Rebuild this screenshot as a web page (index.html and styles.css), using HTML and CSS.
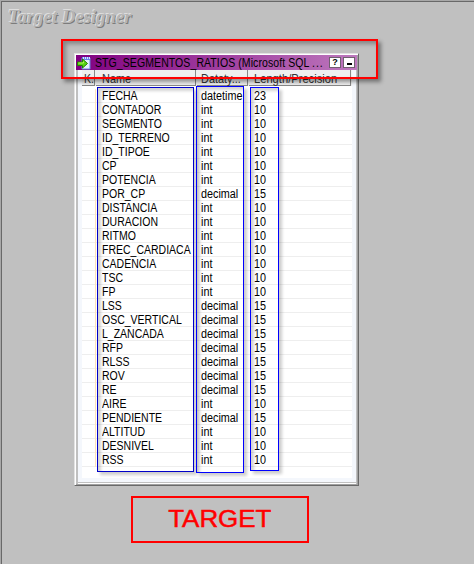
FILE: index.html
```html
<!DOCTYPE html>
<html lang="es">
<head>
<meta charset="utf-8">
<title>Target Designer</title>
<link rel="stylesheet" href="styles.css">
</head>
<body>
<main class="workspace">
  <h1 class="heading">Target Designer</h1>
  <section class="window">
    <header class="titlebar">
      <svg class="icon" width="14" height="14" viewBox="0 0 14 14">
        <path d="M5 2h8v11H5z" fill="#e4efff" stroke="#6787dc"/>
        <path d="M5 1h8v3H5z" fill="#6d82f1"/>
        <path d="M6 1h1v2H6zM8 1h1v2H8zM10 1h1v2h-1zM12 1h1v2h-1z" fill="#d8e5ff"/>
        <path d="M.5 6h5V3l5 4.500-5 4.500V9.500h-5z" fill="#55d512" stroke="#258000"/>
        <path d="M1.500 7h5V5.500" fill="none" stroke="#b4f45f"/>
      </svg>
      <div class="caption"><span>STG_SEGMENTOS_RATIOS (Microsoft SQL <b class="dots">...</b></span></div>
      <button class="tool">?</button>
      <button class="tool"><i class="minimize"></i></button>
    </header>
    <div class="pane">
      <div class="head">
        <div><span>K.</span></div><div><span>Name</span></div><div><span>Dataty...</span></div><div><span>Length/Precision</span></div>
      </div>
      <div class="rows" id="rows"></div>
    </div>
  </section>
  <div class="label"><span>TARGET</span></div>
  <div class="mark mark-title"></div>
  <div class="mark mark-name"></div>
  <div class="mark mark-type"></div>
  <div class="mark mark-length"></div>
</main>
<script src="rows.js"></script>
</body>
</html>
```
FILE: styles.css
```css
* { box-sizing: border-box; }
body { margin: 0; background: #c0c0c0; font: 12px/14px "Liberation Sans", sans-serif; color: #000; }
.workspace { position: relative; height: 564px; overflow: hidden; border: 1px solid #a8a8a8; border-width: 1px 0 0 1px; padding: 5px 0 0 7px; box-shadow: inset 1px 1px #696969; }
.heading { margin: 0; height: 47px; font: italic bold 19px/21px "Liberation Serif", serif; color: #b4b4b4; text-shadow: -1px -1px #dedede, 1px 1px #7c7c7c; white-space: nowrap; transform: scaleX(.985); transform-origin: left; }
.window { width: 285px; height: 433px; margin-left: 66px; padding: 1px; background: #c0c0c0; border: 1px solid; border-color: #e2e2e2 #696969 #696969 #e2e2e2; box-shadow: inset 1px 1px #fff, inset -1px -1px #a0a0a0; }
.titlebar { display: flex; align-items: center; height: 15px; padding: 0 2px 0 1px; gap: 2px; background: linear-gradient(90deg, #800080, #bd78bd); }
.icon { flex: none; }
.caption { flex: 1; min-width: 0; padding-left: 2px; white-space: nowrap; }
.caption span { display: inline-block; transform: scaleX(.875); transform-origin: left; letter-spacing: .1px; }
.dots { font-weight: normal; letter-spacing: 1px; }
.tool { display: flex; flex: none; align-items: center; justify-content: center; width: 12px; height: 11px; padding: 0; border: 1px solid #706070; background: #fff; font: bold 9px/9px "Liberation Sans", sans-serif; color: #000; }
.minimize { width: 5px; height: 2px; margin-top: 3px; background: #000; }
.pane { height: 413px; margin: 0 1px 0 2px; padding: 0 4px; background: #f4f7fc; border-bottom: 1px solid #c0c0c0; box-shadow: 1px 0 #c0c0c0, 0 1px #fff; }
.head, .row { display: grid; grid-template-columns: 14px 101px 52px 1fr; }
.head { grid-template-rows: 16px; height: 16px; line-height: 19px; background: #efefef; color: #333; }
.head div { border-right: 1px solid #888; border-bottom: 1px solid #888; margin-right: 1px; padding-left: 6px; white-space: nowrap; }
.head div:first-child { padding-left: 2px; }
.head span, .row span { display: inline-block; transform: scaleX(.875); transform-origin: left; }
.head div:last-child span { transform: scaleX(.93); }
.head div:nth-child(2) span, .head div:nth-child(3) span { transform: scaleX(.91); }
.rows { height: 392px; padding-top: 2px; background: #fff; border-top: 1px solid #fff; }
.row { height: 14px; border-bottom: 1px solid #eee; white-space: nowrap; }
.row div { padding-left: 6px; height: 14px; line-height: 15px; }
.row div:nth-child(3), .head div:nth-child(3) { padding-left: 4px; }
.row div:nth-child(4), .head div:nth-child(4) { padding-left: 5px; }
.row div:nth-child(n+3) span { transform: scaleX(.9); }
.row .key { border-right: 1px solid #fde3b8; }
.label { display: flex; align-items: center; justify-content: center; width: 178px; height: 47px; margin: 10px 0 0 123px; border: 2px solid #f00; color: #f00; font-size: 24px; line-height: 28px; }
.label span { -webkit-text-stroke: .5px #f00; transform: translateY(-1px) scaleX(1.08); }
.mark { position: absolute; border: 1px solid #00f; box-shadow: 3px 3px 3px rgba(0,0,0,.2), inset 3px 3px 3px rgba(0,0,0,.17); }
.mark-title { left: 60px; top: 38px; width: 317px; height: 40px; border: 2px solid #f00; box-shadow: 3px 3px 4px rgba(0,0,0,.4), inset 3px 3px 4px rgba(0,0,0,.3); }
.mark-name { left: 96px; top: 86px; width: 97px; height: 385px; border-color: #0000c8; }
.mark-type { left: 195px; top: 85px; width: 48px; height: 387px; }
.mark-length { left: 249px; top: 86px; width: 29px; height: 384px; }
```
FILE: rows.js
```js
const names = "FECHA CONTADOR SEGMENTO ID_TERRENO ID_TIPOE CP POTENCIA POR_CP DISTANCIA DURACION RITMO FREC_CARDIACA CADENCIA TSC FP LSS OSC_VERTICAL L_ZANCADA RFP RLSS ROV RE AIRE PENDIENTE ALTITUD DESNIVEL RSS".split(" ");
const decimals = new Set("POR_CP LSS OSC_VERTICAL L_ZANCADA RFP RLSS ROV RE PENDIENTE".split(" "));
document.getElementById("rows").innerHTML = names.map(name => {
  const type = name === "FECHA" ? "datetime" : decimals.has(name) ? "decimal" : "int";
  const size = type === "datetime" ? 23 : type === "decimal" ? 15 : 10;
  return `<div class="row"><div class="key"></div><div><span>${name}</span></div><div><span>${type}</span></div><div><span>${size}</span></div></div>`;
}).join("");
```
